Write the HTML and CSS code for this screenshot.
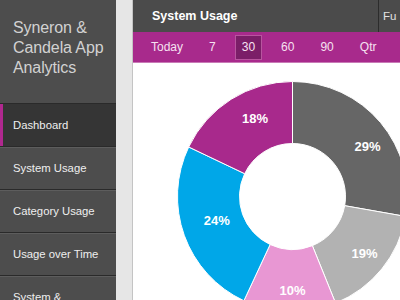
FILE: index.html
```html
<!DOCTYPE html>
<html lang="en">
<head>
<meta charset="utf-8">
<title>Syneron &amp; Candela App Analytics</title>
<link rel="stylesheet" href="styles.css">
</head>
<body>
<div class="app">
  <aside class="sidebar">
    <h1 class="title">Syneron &amp;<br>Candela App<br>Analytics</h1>
    <nav class="nav">
      <a class="nav-item active">Dashboard</a>
      <a class="nav-item">System Usage</a>
      <a class="nav-item">Category Usage</a>
      <a class="nav-item">Usage over Time</a>
      <a class="nav-item">System &amp;</a>
    </nav>
  </aside>
  <div class="gutter"></div>
  <main class="main">
    <header class="topbar">
      <div class="topbar-title">System Usage</div>
      <div class="topbar-tab">Fu</div>
    </header>
    <div class="range">
      <span class="range-item">Today</span>
      <span class="range-item">7</span>
      <span class="range-item selected">30</span>
      <span class="range-item">60</span>
      <span class="range-item">90</span>
      <span class="range-item">Qtr</span>
    </div>
    <svg class="chart" width="267" height="237" viewBox="0 0 267 237">
      <path class="slice s1" d="M159.5 18.5 A115 115 0 0 1 272.75 153.47 L211.69 142.70 A53 53 0 0 0 159.5 80.5 Z"/>
      <path class="slice s2" d="M272.75 153.47 A115 115 0 0 1 202.58 240.13 L179.35 182.64 A53 53 0 0 0 211.69 142.70 Z"/>
      <path class="slice s3" d="M202.58 240.13 A115 115 0 0 1 110.90 237.73 L137.10 181.53 A53 53 0 0 0 179.35 182.64 Z"/>
      <path class="slice s4" d="M110.90 237.73 A115 115 0 0 1 55.70 83.99 L111.66 110.68 A53 53 0 0 0 137.10 181.53 Z"/>
      <path class="slice s5" d="M55.70 83.99 A115 115 0 0 1 159.5 18.5 L159.5 80.5 A53 53 0 0 0 111.66 110.68 Z"/>
      <text class="label" x="234.5" y="88.2">29%</text>
      <text class="label" x="231.5" y="194.7">19%</text>
      <text class="label" x="159.5" y="232.4">10%</text>
      <text class="label" x="83.7" y="162.4">24%</text>
      <text class="label" x="122" y="60.2">18%</text>
    </svg>
  </main>
</div>
</body>
</html>
```

FILE: styles.css
```css
* { box-sizing: border-box; }

html, body {
  margin: 0;
  padding: 0;
  background: #ffffff;
  font-family: "Liberation Sans", Arial, Helvetica, sans-serif;
}

.app {
  display: flex;
  width: 400px;
  height: 300px;
  overflow: hidden;
}

.sidebar {
  flex: none;
  width: 116px;
  background: #4d4d4d;
  display: flex;
  flex-direction: column;
}

.title {
  margin: 0;
  padding: 18px 6px 25px 13px;
  font-size: 16px;
  line-height: 20px;
  font-weight: normal;
  color: #d2d2d2;
  letter-spacing: -0.1px;
}

.nav {
  display: flex;
  flex-direction: column;
}

.nav-item {
  height: 43px;
  flex: none;
  display: flex;
  align-items: center;
  padding-left: 13px;
  font-size: 11.3px;
  color: #efefef;
  border-top: 1px solid #2a2a2a;
  box-shadow: inset 0 1px 0 #5d5d5d;
  white-space: nowrap;
}

.nav-item.active {
  background: #353535;
  box-shadow: inset 3px 0 0 #b0288f;
}

.gutter {
  flex: none;
  width: 17px;
  background: #e6e6e6;
  border-right: 1px solid #c4c4c4;
}

.main {
  flex: 1;
  min-width: 0;
  display: flex;
  flex-direction: column;
  background: #ffffff;
}

.topbar {
  height: 32px;
  flex: none;
  display: flex;
  background: #4b4b4b;
}

.topbar-title {
  width: 245px;
  flex: none;
  display: flex;
  align-items: center;
  padding-left: 19px;
  font-size: 12.5px;
  font-weight: bold;
  color: #ffffff;
}

.topbar-tab {
  flex: 1;
  display: flex;
  align-items: center;
  padding-left: 4px;
  border-left: 1px solid #2c2c2c;
  font-size: 11.5px;
  color: #e2e2e2;
  white-space: nowrap;
}

.range {
  height: 31px;
  flex: none;
  display: flex;
  align-items: center;
  gap: 12px;
  padding-left: 11px;
  background: #a82a8c;
  border-bottom: 1px solid #c87ab6;
}

.range-item {
  height: 25px;
  display: flex;
  align-items: center;
  padding: 0 7px;
  font-size: 12px;
  color: #f6e2f1;
  white-space: nowrap;
}

.range-item.selected {
  background: #7b1e68;
  border: 1px solid #b8559f;
  padding: 0 6px;
}

.chart {
  display: block;
  flex: none;
}

.slice {
  stroke: #ffffff;
  stroke-width: 1;
}

.s1 { fill: #666666; }
.s2 { fill: #b2b2b2; }
.s3 { fill: #e897d3; }
.s4 { fill: #00a7e8; }
.s5 { fill: #a8298c; }

.label {
  fill: #ffffff;
  font-family: "Liberation Sans", Arial, Helvetica, sans-serif;
  font-size: 13px;
  font-weight: bold;
  text-anchor: middle;
}
```
